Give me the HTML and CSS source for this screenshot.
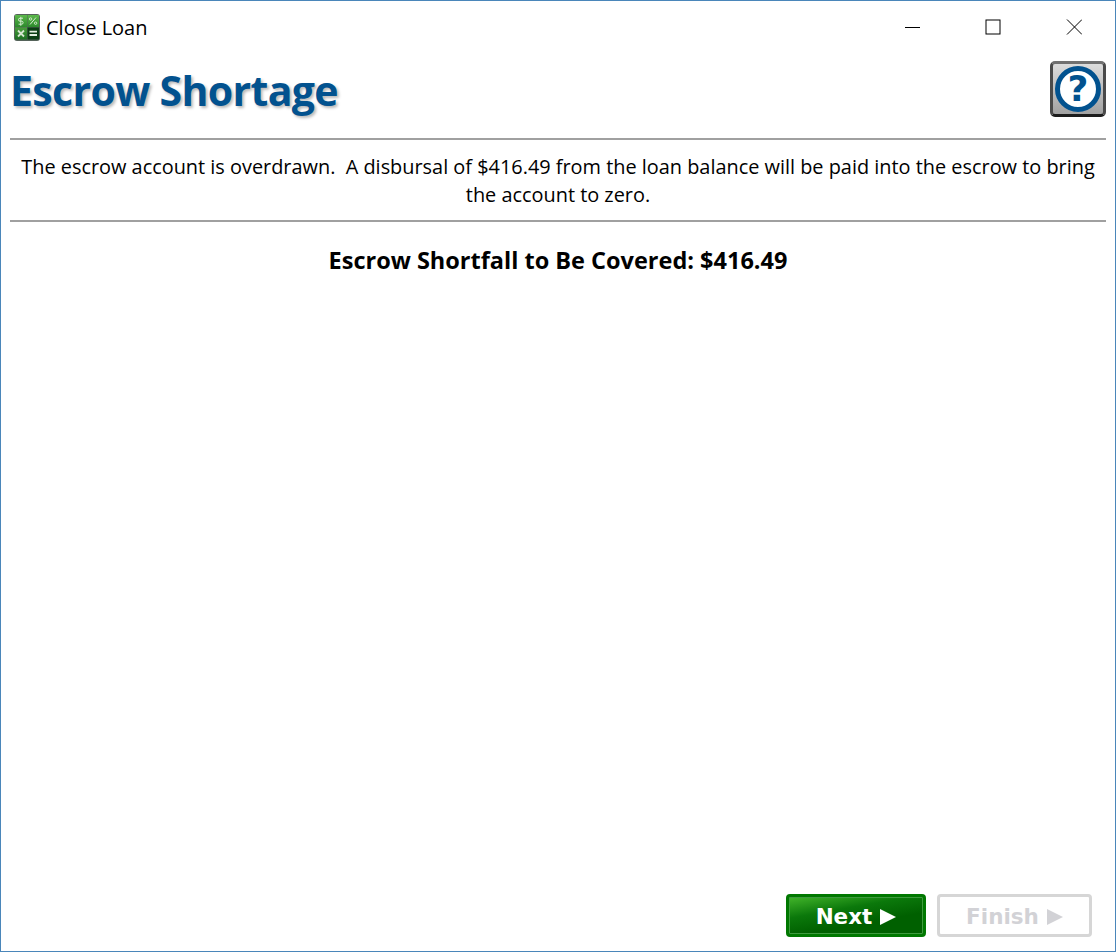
FILE: index.html
```html
<!DOCTYPE html>
<html lang="en">
<head>
<meta charset="utf-8">
<title>Close Loan</title>
<link rel="stylesheet" href="styles.css">
</head>
<body>
<div class="window">
  <div class="titlebar">
    <svg class="app-icon" viewBox="0 0 26 27" aria-hidden="true">
      <defs>
        <linearGradient id="g1" x1="0" y1="0" x2="0" y2="1"><stop offset="0" stop-color="#5cb84a"/><stop offset="1" stop-color="#2c8a2c"/></linearGradient>
        <linearGradient id="g2" x1="0" y1="0" x2="0" y2="1"><stop offset="0" stop-color="#4a9e3c"/><stop offset="1" stop-color="#1c6e22"/></linearGradient>
      </defs>
      <rect x="0" y="0" width="26" height="27" rx="3" fill="#55635a"/>
      <rect x="1" y="1" width="12" height="12" fill="url(#g1)"/>
      <rect x="13.5" y="1" width="11.5" height="12" fill="url(#g1)"/>
      <rect x="1" y="13.5" width="12" height="12" fill="url(#g2)"/>
      <rect x="13.5" y="13.5" width="11.5" height="12" fill="#0c3f14"/>
      <path d="M9 4.2H6a1.4 1.4 0 0 0 0 3h1.6a1.4 1.4 0 0 1 0 3H4.6M6.8 2.8v9" fill="none" stroke="#d8ecd2" stroke-width="1"/>
      <path d="M16 10.5l6-7" stroke="#d8ecd2" stroke-width="1"/>
      <circle cx="16.6" cy="5" r="1.2" fill="none" stroke="#d8ecd2" stroke-width=".9"/>
      <circle cx="21.6" cy="9.2" r="1.2" fill="none" stroke="#d8ecd2" stroke-width=".9"/>
      <path d="M4 16.5l6 6M10 16.5l-6 6" stroke="#d6e6d2" stroke-width="1.8"/>
      <path d="M15.5 17.6h7.5M15.5 21h7.5" stroke="#e4efe0" stroke-width="1.8"/>
    </svg>
    <span class="title">Close Loan</span>
    <div class="controls">
      <svg class="ctl" viewBox="0 0 16 16" aria-hidden="true"><path d="M1 8.5h15" stroke="#000" fill="none"/></svg>
      <svg class="ctl" viewBox="0 0 16 16" aria-hidden="true"><rect x="1" y="1" width="14" height="14" stroke="#000" fill="none"/></svg>
      <svg class="ctl" viewBox="0 0 16 16" aria-hidden="true"><path d="M1 0.5l15 15M16 0.5l-15 15" stroke="#000" fill="none"/></svg>
    </div>
  </div>
  <div class="header">
    <h1 class="heading">Escrow Shortage</h1>
    <button class="help" type="button" aria-label="Help">
      <span class="help-ring">?</span>
    </button>
  </div>
  <div class="message">The escrow account is overdrawn.&nbsp; A disbursal of $416.49 from the loan balance will be paid into the escrow to bring the account to zero.</div>
  <div class="content">
    <div class="shortfall">Escrow Shortfall to Be Covered: $416.49</div>
  </div>
  <div class="footer">
    <button class="btn btn-next" type="button">Next<svg class="arrow" viewBox="0 0 16 16" aria-hidden="true"><path d="M0 0L16 8L0 16Z"/></svg></button>
    <button class="btn btn-finish" type="button" disabled>Finish<svg class="arrow" viewBox="0 0 16 16" aria-hidden="true"><path d="M0 0L16 8L0 16Z"/></svg></button>
  </div>
</div>
</body>
</html>
```

FILE: styles.css
```css
* { box-sizing: border-box; }
html, body { margin: 0; padding: 0; background: #fff; }
body { font-family: "Open Sans", "Noto Sans", sans-serif; color: #000; }
.window {
  width: 1116px;
  height: 952px;
  border: 1px solid #4a86ba;
  display: flex;
  flex-direction: column;
  background: #fff;
}
.titlebar {
  display: flex;
  align-items: center;
  height: 53px;
  padding: 0 0 0 13px;
  flex: none;
}
.app-icon { width: 26px; height: 27px; flex: none; margin-right: 6px; }
.title { font-size: 20px; line-height: 27px; }
.controls { margin-left: auto; display: flex; gap: 65px; padding-right: 33px; margin-top: -1px; }
.ctl { width: 16px; height: 16px; display: block; }
.header {
  flex: none;
  height: 86px;
  margin: 0 9px;
  padding: 0 0 21px 0;
  border-bottom: 2px solid #a0a0a0;
  display: flex;
  align-items: center;
  justify-content: space-between;
}
.heading {
  margin: 9px 0 0;
  font-size: 41px;
  font-weight: 700;
  color: #02528f;
  line-height: 50px;
  letter-spacing: -0.65px;
  text-shadow: 2px 2px 3px rgba(0, 0, 0, 0.28);
}
.help {
  width: 56px;
  height: 56px;
  margin-top: 6px;
  padding: 0;
  border: 3px solid;
  border-color: #707070 #4a4a4a #1c1c1c #4a4a4a;
  border-radius: 5px;
  background: linear-gradient(#dcdcdc, #a2a2a2);
  display: flex;
  align-items: center;
  justify-content: center;
}
.help-ring {
  width: 46px;
  height: 46px;
  border: 5px solid #02528f;
  border-radius: 50%;
  background: #fff;
  color: #02528f;
  font-family: "DejaVu Sans", sans-serif;
  font-weight: 700;
  font-size: 36px;
  line-height: 36px;
  text-align: center;
}
.message {
  flex: none;
  margin: 0 9px;
  height: 82px;
  padding: 13px 8px 0;
  border-bottom: 2px solid #a0a0a0;
  font-size: 19.9px;
  line-height: 28px;
  text-align: center;
}
.content { flex: 1; padding-top: 21px; }
.shortfall { font-size: 23.5px; font-weight: 700; line-height: 34px; text-align: center; }
.footer {
  flex: none;
  display: flex;
  justify-content: flex-end;
  gap: 11px;
  padding: 0 23px 14px 0;
}
.btn {
  height: 43px;
  border-radius: 4px;
  font-family: "DejaVu Sans", sans-serif;
  font-weight: 700;
  font-size: 21.5px;
  line-height: 1;
  padding: 2px 0 0;
  display: flex;
  align-items: center;
  justify-content: center;
  gap: 8px;
}
.arrow { width: 16px; height: 16px; fill: currentColor; display: block; }
.btn-next {
  width: 140px;
  color: #fff;
  border: 3px solid #007800;
  background: linear-gradient(170deg, #43b52b 0%, #0b780b 35%, #006000 65%);
  box-shadow: inset 0 0 0 1px #3f9a3f;
}
.btn-finish {
  width: 155px;
  color: #d2d2d6;
  background: #fff;
  border: 3px solid #d6d6d6;
}
```
